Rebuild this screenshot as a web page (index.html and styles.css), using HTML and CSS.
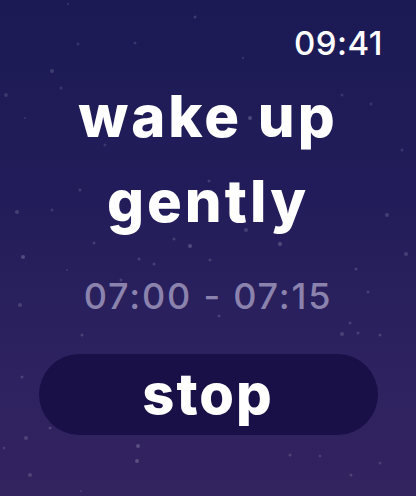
FILE: index.html
```html
<!DOCTYPE html>
<html>
<head>
<meta charset="utf-8">
<link rel="stylesheet" href="styles.css">
</head>
<body>
<div class="screen">
  <svg class="stars" width="416" height="496" viewBox="0 0 416 496" aria-hidden="true">
    <g fill="#ffffff">
      <circle cx="68" cy="4" r="1" opacity=".15"/>
      <circle cx="195" cy="17" r="1.5" opacity=".15"/>
      <circle cx="78" cy="44" r="1.5" opacity=".12"/>
      <circle cx="135" cy="43" r="1.5" opacity=".12"/>
      <circle cx="243" cy="58" r="1" opacity=".15"/>
      <circle cx="52" cy="71" r="2" opacity=".15"/>
      <circle cx="61" cy="88" r="1.5" opacity=".12"/>
      <circle cx="6" cy="95" r="2" opacity=".12"/>
      <circle cx="342" cy="95" r="1.5" opacity=".12"/>
      <circle cx="371" cy="104" r="1.5" opacity=".12"/>
      <circle cx="250" cy="118" r="2" opacity=".2"/>
      <circle cx="25" cy="118" r="1" opacity=".12"/>
      <circle cx="303" cy="132" r="1" opacity=".12"/>
      <circle cx="105" cy="145" r="1.5" opacity=".12"/>
      <circle cx="402" cy="150" r="1.5" opacity=".12"/>
      <circle cx="209" cy="181" r="1.5" opacity=".15"/>
      <circle cx="80" cy="190" r="1.5" opacity=".15"/>
      <circle cx="17" cy="212" r="2" opacity=".15"/>
      <circle cx="52" cy="210" r="1.5" opacity=".12"/>
      <circle cx="387" cy="215" r="2" opacity=".15"/>
      <circle cx="246" cy="230" r="2" opacity=".15"/>
      <circle cx="174" cy="239" r="1.5" opacity=".15"/>
      <circle cx="280" cy="244" r="2" opacity=".2"/>
      <circle cx="190" cy="246" r="2" opacity=".2"/>
      <circle cx="94" cy="243" r="1.5" opacity=".15"/>
      <circle cx="406" cy="254" r="2" opacity=".15"/>
      <circle cx="23" cy="257" r="2" opacity=".2"/>
      <circle cx="139" cy="259" r="1.5" opacity=".15"/>
      <circle cx="210" cy="260" r="1.5" opacity=".15"/>
      <circle cx="154" cy="264" r="1.5" opacity=".15"/>
      <circle cx="356" cy="269" r="1.5" opacity=".15"/>
      <circle cx="67" cy="270" r="1" opacity=".12"/>
      <circle cx="368" cy="292" r="1.5" opacity=".15"/>
      <circle cx="20" cy="305" r="2" opacity=".15"/>
      <circle cx="121" cy="280" r="1.5" opacity=".15"/>
      <circle cx="350" cy="323" r="1.5" opacity=".15"/>
      <circle cx="219" cy="316" r="1.5" opacity=".15"/>
      <circle cx="82" cy="335" r="1.5" opacity=".15"/>
      <circle cx="342" cy="334" r="2" opacity=".15"/>
      <circle cx="358" cy="333" r="1.5" opacity=".15"/>
      <circle cx="380" cy="335" r="1.5" opacity=".15"/>
      <circle cx="22" cy="377" r="1.5" opacity=".15"/>
      <circle cx="26" cy="438" r="2" opacity=".15"/>
      <circle cx="50" cy="428" r="1.5" opacity=".15"/>
      <circle cx="4" cy="448" r="1.5" opacity=".12"/>
      <circle cx="138" cy="446" r="2" opacity=".2"/>
      <circle cx="137" cy="461" r="2" opacity=".2"/>
      <circle cx="30" cy="475" r="2" opacity=".15"/>
      <circle cx="351" cy="475" r="1.5" opacity=".15"/>
      <circle cx="290" cy="455" r="1.5" opacity=".15"/>
      <circle cx="380" cy="463" r="1.5" opacity=".12"/>
      <circle cx="320" cy="456" r="1.5" opacity=".12"/>
      <circle cx="81" cy="491" r="1" opacity=".12"/>
    </g>
  </svg>
  <div class="status">
    <span class="clock">09:41</span>
  </div>
  <main class="content">
    <h1 class="title">wake up<br>gently</h1>
    <p class="window">07:00 - 07:15</p>
    <button class="stop">stop</button>
  </main>
</div>
</body>
</html>
```

FILE: styles.css
```css
html, body {
  margin: 0;
  padding: 0;
}

body {
  width: 416px;
  height: 496px;
  overflow: hidden;
  font-family: Inter, "Noto Sans", sans-serif;
}

.screen {
  position: relative;
  width: 416px;
  height: 496px;
  background: linear-gradient(180deg, #1b1a55 0%, #221d5a 40%, #2e2260 75%, #33235f 100%);
  overflow: hidden;
}

.stars {
  position: absolute;
  left: 0;
  top: 0;
}

.status {
  position: relative;
  display: flex;
  justify-content: flex-end;
  padding: 23px 33px 0 0;
}

.clock {
  color: #ffffff;
  font-size: 33px;
  font-weight: 500;
  line-height: 40px;
  letter-spacing: 0.5px;
}

.content {
  position: relative;
  display: flex;
  flex-direction: column;
  align-items: center;
}

.title {
  margin: 11px 0 0 0;
  color: #ffffff;
  font-size: 58px;
  font-weight: 800;
  line-height: 85px;
  text-align: center;
  letter-spacing: 3px;
}

.window {
  margin: 32px 0 0 0;
  color: #8b83ad;
  font-size: 36px;
  font-weight: 500;
  line-height: 40px;
  letter-spacing: 1.8px;
}

.stop {
  margin-top: 38px;
  width: 339px;
  height: 81px;
  border: none;
  border-radius: 41px;
  background: #1a1048;
  color: #ffffff;
  font-family: Inter, "Noto Sans", sans-serif;
  font-size: 56px;
  font-weight: 800;
  line-height: 81px;
  letter-spacing: 2px;
  padding: 0 0 5px 0;
}
```
